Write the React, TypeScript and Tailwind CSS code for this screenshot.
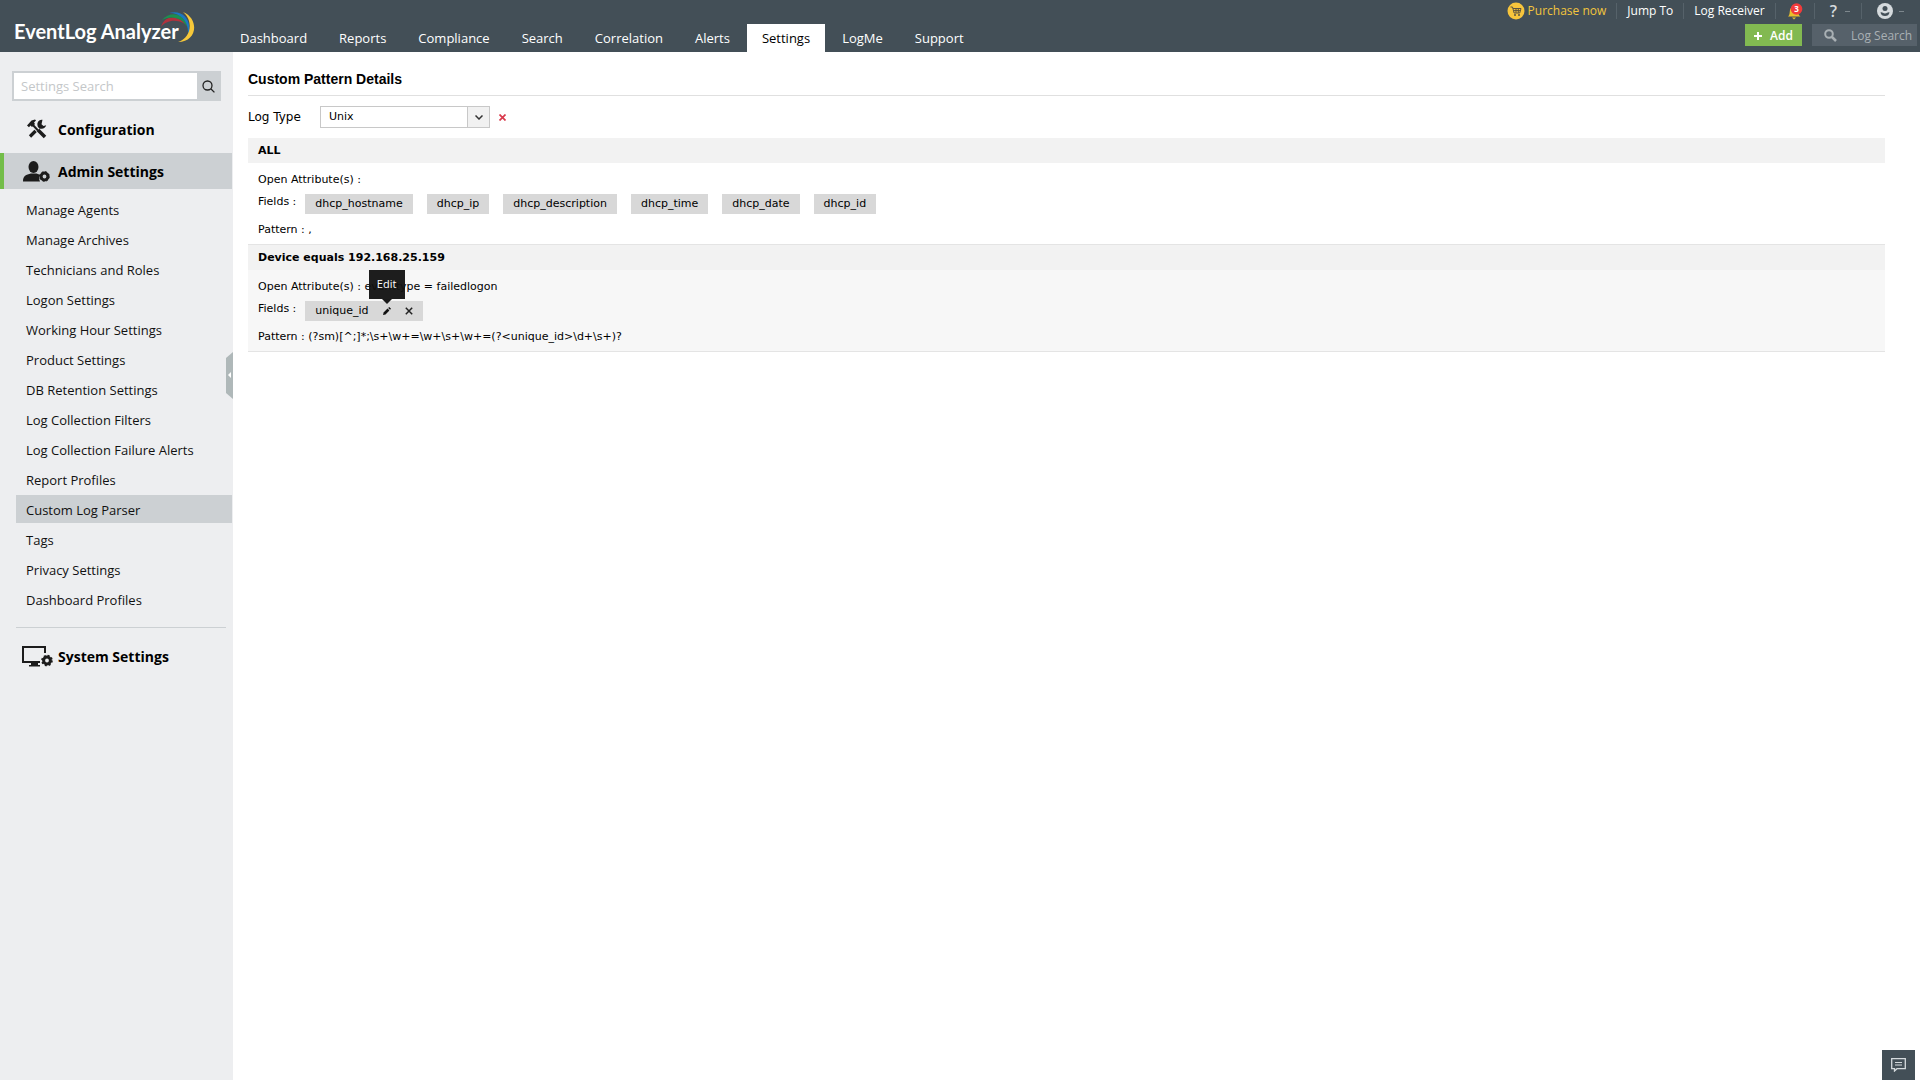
import React from 'react';
import clsx from 'clsx';

const navItems = ['Dashboard', 'Reports', 'Compliance', 'Search', 'Correlation', 'Alerts', 'Settings', 'LogMe', 'Support'];

const adminItems = [
  'Manage Agents',
  'Manage Archives',
  'Technicians and Roles',
  'Logon Settings',
  'Working Hour Settings',
  'Product Settings',
  'DB Retention Settings',
  'Log Collection Filters',
  'Log Collection Failure Alerts',
  'Report Profiles',
  'Custom Log Parser',
  'Tags',
  'Privacy Settings',
  'Dashboard Profiles',
];

const dhcpFields = ['dhcp_hostname', 'dhcp_ip', 'dhcp_description', 'dhcp_time', 'dhcp_date', 'dhcp_id'];

function Logo() {
  return (
    <a href="#" className="relative block pl-[14px] font-['Lato'] text-[20px] leading-6 font-bold text-white">
      EventLog Analyzer
      <svg className="absolute -top-2 left-[160px]" width="36" height="32" viewBox="0 0 36 32" fill="none">
        <path d="M1 16C3 9 8 6 14 6.500C18 7 22 9 25 13C16 7.500 6 9.500 1 16Z" fill="#b0323e" />
        <path d="M2 9C10 0 24 1 28 17C22 6 11 4 2 9Z" fill="#1d8f50" />
        <path d="M9 2C23 -2 33 10 28 24C29 10 21 2 9 2Z" fill="#1b78c2" />
        <path d="M23 1C40 8 37 31 18 31C31 27 34 10 23 1Z" fill="#f6c83a" />
      </svg>
    </a>
  );
}

function Separator() {
  return <span className="h-4 w-px bg-[#56626a]" />;
}

function TopLinks() {
  return (
    <div className="flex h-[22px] items-center text-xs">
      <a href="#" className="mr-[10px] flex items-center gap-[3px] text-[#f2c53d]">
        <svg width="18" height="18" viewBox="0 0 18 18">
          <circle cx="9" cy="9" r="8.500" fill="#f7c53c" />
          <path d="M3.500 5h2l1.600 6h5.600l1.300-4.500H6M7 8.600h6.400M9 6.500v4.300M11.300 6.500v4.300" stroke="#5a5340" fill="none" />
          <circle cx="8" cy="13" r="1" fill="#5a5340" />
          <circle cx="12" cy="13" r="1" fill="#5a5340" />
        </svg>
        Purchase now
      </a>
      <Separator />
      <a href="#" className="mx-[10px] text-white">Jump To</a>
      <Separator />
      <a href="#" className="mx-[10px] text-white">Log Receiver</a>
      <Separator />
      <button type="button" aria-label="Notifications" className="mx-[11px]">
        <svg width="16" height="17" viewBox="0 0 16 17">
          <path d="M1 13.500C3 12 2.500 9 3 7C3.500 4.500 5 4 7 4s3.500 1 4 3c.5 2 0 5 2.500 6.500Z" fill="#e9bf2c" />
          <path d="M5 14.500h4l-2 2Z" fill="#e9bf2c" />
          <circle cx="9.500" cy="6" r="5.800" fill="#f23b3b" />
          <text x="9.500" y="9" textAnchor="middle" fill="#fff" fontSize="8" fontWeight="700" fontFamily="Open Sans">3</text>
        </svg>
      </button>
      <Separator />
      <button type="button" aria-label="Help" className="mx-[11px] flex items-center gap-2 pl-1 text-[16px] leading-5 font-semibold text-[#d5dadd]">
        ?
        <span className="h-px w-[5px] bg-[#7d878d]" />
      </button>
      <Separator />
      <button type="button" aria-label="Account" className="ml-[15px] flex items-center gap-[6px]">
        <svg width="16" height="16" viewBox="0 0 16 16">
          <circle cx="8" cy="8" r="8" fill="#d5dadd" />
          <circle cx="8" cy="5.500" r="2.500" fill="#434f57" />
          <path d="M3.500 9.500C5 8.800 6 10.500 8 10.500s3-1.700 4.500-1C12 12 10.500 13 8 13s-4-1-4.500-3.500Z" fill="#434f57" />
        </svg>
        <span className="h-px w-[5px] bg-[#7d878d]" />
      </button>
    </div>
  );
}

function Header() {
  return (
    <header className="flex h-[52px] bg-[#434f57]">
      <div className="w-[225px] pt-[19px]">
        <Logo />
      </div>
      <nav className="flex flex-1 items-end gap-[2px] text-[13px]">
        {navItems.map((item) => (
          <a
            key={item}
            href="#"
            className={clsx('h-7 px-[15px] leading-7', item === 'Settings' ? 'bg-white text-black' : 'text-white')}
          >
            {item}
          </a>
        ))}
      </nav>
      <div className="flex flex-col items-end gap-[2px]">
        <div className="pr-4">
          <TopLinks />
        </div>
        <div className="flex gap-[10px] pr-[3px]">
          <button type="button" className="flex h-[22px] w-[57px] items-center justify-center gap-2 bg-[#82b951] pt-px text-xs font-semibold text-white">
            <svg width="8" height="8" viewBox="0 0 8 8">
              <path d="M4 0v8M0 4h8" stroke="#fff" strokeWidth="2" />
            </svg>
            Add
          </button>
          <label className="flex h-[22px] w-[105px] items-center gap-[14px] bg-[#56616a] pt-px pl-3">
            <svg width="13" height="13" viewBox="0 0 13 13" fill="none" stroke="#a9b0b4" strokeWidth="2">
              <circle cx="5" cy="5" r="3.800" />
              <path d="M8 8l4 4" strokeWidth="2.500" />
            </svg>
            <input aria-label="Log Search" placeholder="Log Search" className="w-[66px] bg-transparent text-xs outline-none placeholder:text-[#a9b0b4]" />
          </label>
        </div>
      </div>
    </header>
  );
}

function ToolsIcon() {
  return (
    <svg width="20" height="20" viewBox="0 0 20 20" fill="none">
      <path d="M3 17.500L13.500 7" stroke="#1c1c1c" strokeWidth="3.200" />
      <path d="M15.500 .8a4.500 4.500 0 1 0 3.700 5.500l-2.700 .8l-2-1.800z" fill="#1c1c1c" />
      <path d="M5.500 5.500L17.500 18" stroke="#edeef0" strokeWidth="4.500" />
      <path d="M5 5L11 11.500" stroke="#1c1c1c" strokeWidth="2" />
      <path d="M11 11l7 7" stroke="#1c1c1c" strokeWidth="3.600" />
      <path d="M0 6.500L4.500 1.500L8 .5L9 1.500L7 3.500L8 5L5 8L3.500 6.500L2 8.200Z" fill="#1c1c1c" />
    </svg>
  );
}

function AdminIcon() {
  return (
    <svg width="27" height="21" viewBox="0 0 27 21">
      <ellipse cx="10.500" cy="6" rx="5" ry="6" fill="#1c1c1c" />
      <path d="M0 20.500C0 15 3 13.500 8 12.500h5.500l4 1.500a6 6 0 0 0-.5 6.500Z" fill="#1c1c1c" />
      <circle cx="21.500" cy="15.500" r="3.400" fill="none" stroke="#1c1c1c" strokeWidth="3" />
      <circle cx="21.500" cy="15.500" r="4.800" fill="none" stroke="#1c1c1c" strokeWidth="1" strokeDasharray="1.900 1.870" />
    </svg>
  );
}

function SystemIcon() {
  return (
    <svg width="31" height="21" viewBox="0 0 31 21" fill="none">
      <path d="M18 16H1V1h22v6" stroke="#1c1c1c" strokeWidth="2" />
      <path d="M9 17h7v2h2v1.500H7V19h2Z" fill="#1c1c1c" />
      <circle cx="25" cy="14.500" r="3.400" stroke="#1c1c1c" strokeWidth="3" />
      <circle cx="25" cy="14.500" r="5" stroke="#1c1c1c" strokeWidth="1.600" strokeDasharray="2 1.930" />
    </svg>
  );
}

function Sidebar() {
  return (
    <aside className="relative w-[233px] shrink-0 bg-[#edeef0] pt-[19px] text-[13px] text-[#111]">
      <form className="mr-3 ml-3 flex h-[30px] border-2 border-[#ccd0d3]">
        <input
          aria-label="Settings Search"
          placeholder="Settings Search"
          className="min-w-0 flex-1 bg-white px-[7px] pt-px text-[13px] outline-none placeholder:text-[#c4c7c9]"
        />
        <button type="button" aria-label="Search" className="flex w-[22px] items-center justify-end bg-[#ccd0d3] pr-1">
          <svg width="13" height="13" viewBox="0 0 13 13" fill="none" stroke="#222" strokeWidth="1.300">
            <circle cx="5.500" cy="5.500" r="4.500" />
            <path d="M8.800 8.800l3.600 3.600" />
          </svg>
        </button>
      </form>

      <a href="#" className="mt-[10px] flex h-9 items-center text-[14px] font-bold text-black">
        <span className="w-[58px] pl-[27px]"><ToolsIcon /></span>
        Configuration
      </a>
      <a href="#" className="mt-[6px] mr-px flex h-9 items-center border-l-4 border-[#73bd49] bg-[#ccd0d3] text-[14px] font-bold text-black">
        <span className="w-[54px] pl-[19px]"><AdminIcon /></span>
        Admin Settings
      </a>

      <ul className="mt-[6px] mr-px ml-4 flex flex-col gap-[2px]">
        {adminItems.map((item) => (
          <li key={item}>
            <a
              href="#"
              className={clsx('block h-7 pl-[10px] leading-[30px]', item === 'Custom Log Parser' && 'bg-[#ccd0d3]')}
            >
              {item}
            </a>
          </li>
        ))}
      </ul>

      <hr className="mt-[14px] mr-[7px] ml-4 border-[#ccd0d3]" />
      <a href="#" className="mt-[10px] flex h-9 items-center text-[14px] font-bold text-black">
        <span className="w-[58px] pl-[22px]"><SystemIcon /></span>
        System Settings
      </a>

      {/* Collapse handle */}
      <button type="button" aria-label="Collapse sidebar" className="absolute top-[300px] right-0">
        <svg width="7" height="47" viewBox="0 0 7 47">
          <path d="M7 0v47L0 41V6Z" fill="#afb8b9" />
          <path d="M5 20v6L2 23Z" fill="#fff" />
        </svg>
      </button>
    </aside>
  );
}

function Chip({ children }: { children: React.ReactNode }) {
  return <span className="flex h-5 items-center bg-[#d8d8d8] px-[10px]">{children}</span>;
}

function PatternBlock({
  title,
  attributes,
  pattern,
  shaded,
  children,
}: {
  title: string;
  attributes?: string;
  pattern: string;
  shaded?: boolean;
  children: React.ReactNode;
}) {
  return (
    <section className={clsx('border-b border-[#e4e4e4]', shaded && 'bg-[#f7f7f7]')}>
      <h2 className="h-[25px] bg-[#f2f2f2] px-[10px] leading-[26px] font-bold">{title}</h2>
      <div className="px-[10px] pt-[9px] pb-[6px]">
        <p className="h-4 leading-4">Open Attribute(s) : {attributes}</p>
        <div className="mt-[6px] flex gap-[9px]">
          <span className="leading-4">Fields :</span>
          <div className="flex flex-wrap gap-[14px]">{children}</div>
        </div>
        <p className="mt-2 h-4 leading-4">Pattern : {pattern}</p>
      </div>
    </section>
  );
}

export default function App() {
  return (
    <div className="flex min-h-screen flex-col bg-white font-['Open_Sans',sans-serif]">
      <Header />
      <div className="flex flex-1">
        <Sidebar />
        <main className="flex-1 pr-[35px] pl-[15px] font-['DejaVu_Sans',sans-serif] text-[11px] text-black">
          <h1 className="border-b border-[#e0e0e0] pt-[17px] pb-[6px] font-['Liberation_Sans'] text-[14px] leading-5 font-bold">
            Custom Pattern Details
          </h1>
          <div className="mt-[10px] mb-[10px] flex h-[22px] items-center">
            <label htmlFor="log-type" className="w-[72px] text-xs">Log Type</label>
            <div className="relative w-[170px]">
              <select id="log-type" className="h-[22px] w-full appearance-none border border-[#c8c8c8] bg-white px-2 pt-px outline-none">
                <option>Unix</option>
              </select>
              <span className="pointer-events-none absolute top-px right-px flex h-5 w-[22px] items-center justify-center border-l border-[#c8c8c8] bg-[#f1f1f1]">
                <svg width="8" height="5" viewBox="0 0 8 5" fill="none" stroke="#333" strokeWidth="1.500">
                  <path d="M.5 .5L4 4L7.500 .5" />
                </svg>
              </span>
            </div>
            <button type="button" aria-label="Clear log type" className="ml-[9px]">
              <svg width="7" height="7" viewBox="0 0 7 7" stroke="#d93a4c" strokeWidth="1.700">
                <path d="M.5 .5l6 6M6.500 .5l-6 6" />
              </svg>
            </button>
          </div>

          <PatternBlock title="ALL" pattern=",">
            {dhcpFields.map((field) => (
              <Chip key={field}>{field}</Chip>
            ))}
          </PatternBlock>

          <PatternBlock
            title="Device equals 192.168.25.159"
            attributes="eventtype = failedlogon"
            pattern="(?sm)[^;]*;\s+\w+=\w+\s+\w+=(?<unique_id>\d+\s+)?"
            shaded
          >
            <Chip>
              unique_id
              <button type="button" aria-label="Edit" className="relative ml-[14px]">
                <svg width="8" height="8" viewBox="0 0 8 8" fill="#111">
                  <path d="M0 8L.6 5.500L4.500 1.600L6.400 3.500L2.500 7.400Z" />
                  <path d="M5.200 1L6.200 0L8 1.800L7 2.800Z" />
                </svg>
                <span className="absolute bottom-4 left-1/2 flex h-[29px] w-9 -translate-x-1/2 items-center justify-center bg-[#111]/95 font-['Open_Sans'] text-[11px] text-white">
                  Edit
                  <svg className="absolute top-full" width="10" height="5" viewBox="0 0 10 5">
                    <path d="M0 0h10L5 5Z" fill="#1a1a1a" />
                  </svg>
                </span>
              </button>
              <button type="button" aria-label="Remove" className="ml-[14px]">
                <svg width="8" height="8" viewBox="0 0 8 8" stroke="#222" strokeWidth="1.500">
                  <path d="M.8 .8l6.400 6.400M7.200 .8L.8 7.200" />
                </svg>
              </button>
            </Chip>
          </PatternBlock>
        </main>
      </div>

      {/* Chat button */}
      <button type="button" aria-label="Chat" className="fixed right-[5px] bottom-0 flex h-[30px] w-[33px] items-center justify-center bg-[#434f57]">
        <svg width="15" height="14" viewBox="0 0 15 14" fill="none" stroke="#d5dadd">
          <path d="M.7 .7h13.600v10H6L3.500 13v-2.300H.7Z" strokeWidth="1.300" />
          <path d="M4 4.500h7M4 7h7" />
        </svg>
      </button>
    </div>
  );
}
